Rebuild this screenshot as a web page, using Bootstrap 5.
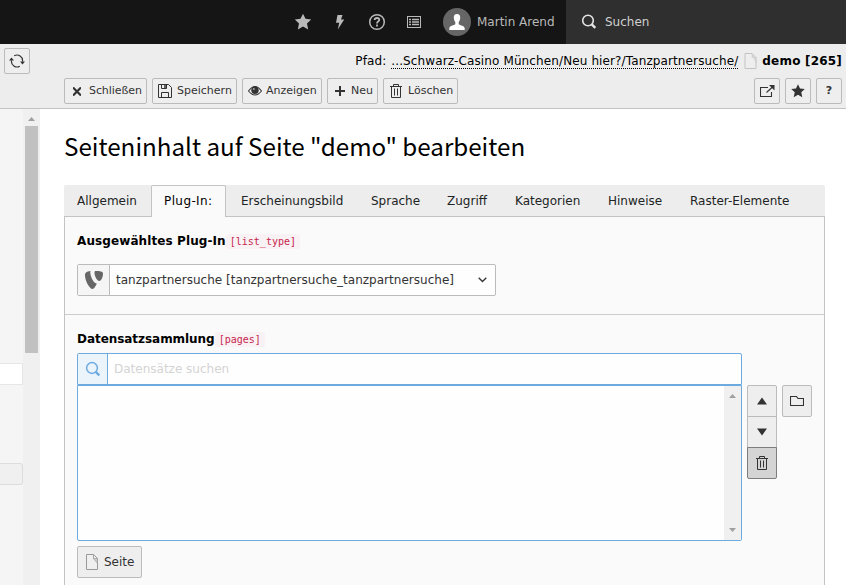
<!DOCTYPE html>
<html lang="de">
<head>
<meta charset="utf-8">
<title>Seiteninhalt bearbeiten</title>
<link href="https://cdn.jsdelivr.net/npm/bootstrap@5.3.0/dist/css/bootstrap.min.css" rel="stylesheet">
<style>
html,body{height:585px;overflow:hidden}
body{font:12px/18px "DejaVu Sans",Verdana,sans-serif;color:#000;background:#fff;white-space:nowrap}
svg{display:block;flex:none}
.topbar{height:44px;background:#151515;color:#b9b9b9}
.tb-item{width:37px}
.tb-user{width:134px;padding-left:11px;gap:6px}
.tb-search{width:280px;background:#2f2f2f;color:#d0d0d0;padding-left:15px;gap:8px}
.dochead{height:65px;background:#ededed;border-bottom:1px solid #c3c3c3}
.dh-left{width:64px;padding:4px}
.pathline{height:34px;padding-right:4px}
.pathline .trail{border-bottom:1px dotted #000;line-height:14px;letter-spacing:.115px}
.t-path{letter-spacing:.1px;margin-right:5px}
.t-demo{letter-spacing:.2px}
.btn.tool{--bs-btn-bg:#eee;--bs-btn-color:#333;--bs-btn-border-color:#bbb;--bs-btn-border-radius:2px;--bs-btn-padding-x:0;--bs-btn-padding-y:0;--bs-btn-font-size:11px;--bs-btn-line-height:16px;height:26px;display:flex;align-items:center}
.btn.sq{width:26px;justify-content:center}
.btn.tall{height:32px;width:30px;justify-content:center}
.b-close{width:83px;padding-left:8px!important;letter-spacing:-.08px}
.b-save{width:85px;margin-left:5px;padding-left:5px!important;gap:5px}
.b-view{width:80px;margin-left:5px;padding-left:5px!important;gap:4px}
.b-new{width:51px;margin-left:5px;padding-left:7px!important;gap:6px}
.b-del{width:75px;margin-left:5px;padding-left:6px!important;gap:6px}
.b-page{height:32px!important;width:65px;margin-top:5px;padding-left:8px!important;font-size:12px!important;gap:6px}
.stack{margin:37px 5px 0}
.stack .btn+.btn{margin-top:-1px}
.stack .btn:first-child{border-radius:2px 2px 0 0}
.stack .btn:nth-child(2){border-radius:0}
.stack .btn:last-child{border-radius:0 0 2px 2px;background:#d4d4d4;border-color:#7d7d7d}
.b-folder{margin-top:37px}
.work{height:476px}
.treepane{width:23px;background:#f5f5f5}
.tree-input{margin-top:254px;height:22px;background:#fff;border:1px solid #e6e6e6;border-left:0}
.tree-box{margin-top:78px;height:22px;background:#f0f0f0;border:1px solid #ddd;border-left:0;border-radius:0 3px 3px 0}
.vscroll{width:17px;padding:8px 0;background:#f0f0f0}
.vscroll .thumb{width:13px;height:227px;background:#c1c1c1;margin-top:5px}
.module{padding:0 21px 0 24px}
h1{font:400 24.2px/36px "Noto Sans CJK SC","Noto Sans CJK JP",sans-serif;margin:19px 0 21px}
.nav-tabs.formtabs{--bs-nav-tabs-border-width:0;background:#ededed;height:32px;border-bottom:1px solid #c3c3c3;border-radius:2px 2px 0 0;flex-wrap:nowrap}
.formtabs .nav-link{height:32px;padding:7px 0 0 13px;border:0;color:#212424;line-height:18px;border-radius:0}
.formtabs .nav-link.active{background:#fafafa;border:1px solid #c3c3c3;border-bottom:0;color:#000;padding:6px 0 0 12px;border-radius:2px 2px 0 0;letter-spacing:.4px}
.t1{width:87px}.t2{width:75px}.t3{width:132px}.t4{width:76px}.t5{width:68px}.t6{width:93px}.t7{width:82px}.t8{width:127px}
.formtabs .t3{padding-left:15px}
.panel-body{height:369px;background:#fafafa;border:solid #c3c3c3;border-width:0 1px}
.sec1{height:98px;border-bottom:1px solid #ccc;padding:15px 12px 0}
.sec2{padding:15px 12px 0}
.lbl{font-weight:700;height:18px}
.lbl span{letter-spacing:.1px}
.sec2 .lbl span{letter-spacing:-.05px}
.lbl code{font:10px/15px "DejaVu Sans Mono",monospace;color:#c7254e;background:#f9f2f4;padding:0 4px;border-radius:2px;margin-top:1px}
.sel{width:419px;height:32px;border:1px solid #bbb;border-radius:2px;background:#fefefe;margin-top:14px;color:#333;letter-spacing:.02px}
.sel .ico{width:32px;height:30px;background:#f5f5f5;border-right:1px solid #bbb;margin-right:6px}
.rec{width:665px}
.find{height:32px;border:1px solid #6daae0;border-radius:2px 2px 0 0;background:#fefefe;margin-top:5px;color:#d4d4d4}
.find .ico{width:30px;height:30px;background:#ebf3fb;border-right:1px solid #6daae0;margin-right:6px}
.listbox{height:156px;border:1px solid #6daae0;border-radius:0 0 2px 2px;background:#fefefe}
</style>
<script src="https://cdn.jsdelivr.net/npm/bootstrap@5.3.0/dist/js/bootstrap.bundle.min.js"></script>
</head>
<body>
<header class="topbar d-flex justify-content-end">
  <div class="tb-item d-flex align-items-center justify-content-center"><svg width="18" height="18" viewBox="0 0 18 18" fill="#b9b9b9"><path d="M9 .8l2.500 5 5.700.7-4.200 3.900 1.200 6L9 13.600l-5.200 2.800 1.200-6L.8 6.500l5.700-.7z"/></svg></div>
  <div class="tb-item d-flex align-items-center justify-content-center"><svg width="10" height="16" viewBox="0 0 10 16" fill="#b9b9b9"><path d="M2.500 1h5L6 5.500h3.200L2.800 15.400 4.200 8.800H1z"/></svg></div>
  <div class="tb-item d-flex align-items-center justify-content-center"><svg width="18" height="18" viewBox="0 0 18 18" fill="none" stroke="#b9b9b9"><circle cx="9" cy="9" r="7.300" stroke-width="1.500"/><path d="M6.600 7Q6.800 5 9 5t2.300 1.800C11.300 8.600 9 8.500 9 10.400M9 11.600v1.800" stroke-width="1.800"/></svg></div>
  <div class="tb-item d-flex align-items-center justify-content-center"><svg width="14" height="12" viewBox="0 0 14 12" fill="none" stroke="#b9b9b9"><rect x=".5" y=".5" width="13" height="11"/><path d="M2 3.500h2m1 0h7M2 6h2m1 0h7M2 8.500h2m1 0h7" stroke-width="1.400"/></svg></div>
  <div class="tb-user d-flex align-items-center"><svg width="28" height="28" viewBox="0 0 28 28"><circle cx="14" cy="14" r="14" fill="#666"/><path d="M14 6c2.300 0 3.400 1.600 3.200 4-.1 2-.8 3.100-1.500 4v2.200c.8 1 6 1.300 6 4.200V22H6.300v-1.600c0-2.900 5.200-3.200 6-4.200V14c-.7-.9-1.400-2-1.500-4C10.600 7.600 11.700 6 14 6z" fill="#fff"/></svg><span>Martin Arend</span></div>
  <div class="tb-search d-flex align-items-center"><svg width="16" height="16" viewBox="0 0 16 16" fill="none" stroke="#e4e4e4"><circle cx="7" cy="6.500" r="5.300" stroke-width="1.600"/><path d="M10.800 10.300l3.500 3.500" stroke-width="2.400"/></svg><span>Suchen</span></div>
</header>

<div class="dochead d-flex">
  <div class="dh-left"><button class="btn tool sq"><svg width="16" height="14" viewBox="0 0 16 14" fill="none" stroke="#333" stroke-width="1.200"><path d="M5.200 1.800A5.600 5.600 0 0 1 13.500 7.500M10.800 12.200A5.600 5.600 0 0 1 2.500 6.500"/><path d="M11 7.500h5l-2.500 3zM0 6.500h5L2.500 3.500z" fill="#333" stroke="none"/></svg></button></div>
  <div class="flex-grow-1">
    <div class="pathline d-flex align-items-center justify-content-end"><span class="t-path">Pfad:</span><span class="trail">...Schwarz-Casino München/Neu hier?/Tanzpartnersuche/</span><svg class="me-1 pathicon" width="20" height="16" viewBox="-6.500 0 20 16"><path d="M.5.500h7l4 4v11H.500z" fill="#eee" stroke="#c3c3c3"/><path d="M7.500.500v4h4v5z" fill="#d5d5d5" stroke="#ccc" stroke-width=".6"/></svg><b class="t-demo">demo [265]</b></div>
    <div class="d-flex pe-1">
      <button class="btn tool b-close"><svg class="me-2" width="8" height="9" viewBox="0 0 8 9"><path d="M0 .500l8 8M8 .500L0 8.500" stroke="#333" stroke-width="2.200"/></svg><span>Schließen</span></button>
      <button class="btn tool b-save"><svg width="14" height="14" viewBox="0 0 14 14" fill="none" stroke="#333"><path d="M.5.500h10l3 3v10H.500zM3.500.500v4h5v-4M3.500 13.500v-5h7v5"/><path d="M7 1v3" stroke-width="1.500"/></svg><span>Speichern</span></button>
      <button class="btn tool b-view"><svg width="14" height="12" viewBox="0 0 14 12"><path d="M.5 6Q7-3 13.500 6 7 14 .5 6z" fill="none" stroke="#333" stroke-width="1.100"/><circle cx="7" cy="5.300" r="3.700" fill="#333"/><circle cx="5.800" cy="4" r="1" fill="#aaa"/></svg><span>Anzeigen</span></button>
      <button class="btn tool b-new"><svg width="10" height="10" viewBox="0 0 10 10"><path d="M0 5h10M5 0v10" stroke="#333" stroke-width="2"/></svg><span>Neu</span></button>
      <button class="btn tool b-del"><svg width="12" height="14" viewBox="0 0 12 14" fill="none" stroke="#333"><path d="M0 2.500h12M3.500 2V.500h5V2M1.500 3v10.500h9V3M4.500 4.500v7M7.500 4.500v7"/></svg><span>Löschen</span></button>
      <div class="ms-auto d-flex" style="gap:5px">
        <button class="btn tool sq"><svg width="15" height="12" viewBox="0 0 15 12" fill="none" stroke="#333"><path d="M8 2.500H.500v9h11V7M6.500 7.500l6-5.500" stroke-width="1.100"/><path d="M9 0h5.500v5.500z" fill="#333" stroke="none"/></svg></button>
        <button class="btn tool sq"><svg width="14" height="14" viewBox="0 0 18 18" fill="#333"><path d="M9 .3l2.600 5.400 6.100.8-4.500 4.100 1.300 6.300L9 13.900l-5.500 3 1.300-6.300L.3 6.500l6.100-.8z"/></svg></button>
        <button class="btn tool sq fw-bold">?</button>
      </div>
    </div>
  </div>
</div>

<div class="work d-flex">
  <aside class="treepane"><div class="tree-input"></div><div class="tree-box"></div></aside>
  <div class="vscroll d-flex flex-column align-items-center"><svg width="7" height="4" viewBox="0 0 7 4"><path d="M0 4L3.500 0 7 4z" fill="#a0a0a0"/></svg><div class="thumb"></div></div>
  <main class="module flex-grow-1">
    <h1>Seiteninhalt auf Seite "demo" bearbeiten</h1>
    <nav class="nav nav-tabs formtabs">
      <a class="nav-link t1">Allgemein</a>
      <a class="nav-link t2 active">Plug-In:</a>
      <a class="nav-link t3">Erscheinungsbild</a>
      <a class="nav-link t4">Sprache</a>
      <a class="nav-link t5">Zugriff</a>
      <a class="nav-link t6">Kategorien</a>
      <a class="nav-link t7">Hinweise</a>
      <a class="nav-link t8">Raster-Elemente</a>
    </nav>
    <div class="panel-body">
      <section class="sec1">
        <div class="lbl d-flex align-items-center"><span>Ausgewähltes Plug-In</span><code>[list_type]</code></div>
        <div class="sel d-flex align-items-center">
          <div class="ico d-flex align-items-center justify-content-center"><svg width="18" height="18" viewBox="0 0 18 18" fill="#666"><path d="M5.500 0C4.500 2.500 7.500 12 11.800 12.500 10.800 15 9 18 7.500 18 4.500 18 0 9.500 0 4.500 0 1.500 1 .8 5.500 0zM10.500 0c4.500 0 7.500.3 7.500 2.500 0 3.500-1.800 7.500-3.500 7.500-2.500 0-5-5-5-8C9.500.5 9.800 0 10.500 0z"/></svg></div>
          <span>tanzpartnersuche [tanzpartnersuche_tanzpartnersuche]</span>
          <svg class="ms-auto me-2" width="9" height="6" viewBox="0 0 9 6"><path d="M.7.700l3.800 3.800L8.300.700" fill="none" stroke="#333" stroke-width="1.300"/></svg>
        </div>
      </section>
      <section class="sec2">
        <div class="lbl d-flex align-items-center"><span>Datensatzsammlung</span><code>[pages]</code></div>
        <div class="d-flex">
          <div class="rec">
            <div class="find d-flex align-items-center"><div class="ico d-flex align-items-center justify-content-center"><svg width="16" height="16" viewBox="0 0 16 16" fill="none" stroke="#6daae0"><circle cx="7" cy="7" r="5.400" stroke-width="1.500"/><path d="M10.800 10.800l3.500 3.500" stroke-width="2.400"/></svg></div><span>Datensätze suchen</span></div>
            <div class="listbox d-flex justify-content-end"><div class="vscroll d-flex flex-column align-items-center justify-content-between"><svg width="7" height="4" viewBox="0 0 7 4"><path d="M0 4L3.500 0 7 4z" fill="#a0a0a0"/></svg><svg width="7" height="4" viewBox="0 0 7 4"><path d="M0 0L3.500 4 7 0z" fill="#a0a0a0"/></svg></div></div>
          </div>
          <div class="stack d-flex flex-column">
            <button class="btn tool tall"><svg width="10" height="8" viewBox="0 0 10 8"><path d="M0 7.500L5 .500l5 7z" fill="#333"/></svg></button>
            <button class="btn tool tall"><svg width="10" height="8" viewBox="0 0 10 8"><path d="M0 .500L5 7.500l5-7z" fill="#333"/></svg></button>
            <button class="btn tool tall"><svg width="12" height="14" viewBox="0 0 12 14" fill="none" stroke="#333"><path d="M0 2.500h12M3.500 2V.500h5V2M1.500 3v10.500h9V3M4.500 4.500v7M7.500 4.500v7"/></svg></button>
          </div>
          <button class="btn tool tall b-folder"><svg width="14" height="10" viewBox="0 0 14 10" fill="none" stroke="#333"><path d="M.5 9.500V.500h6l1.500 2h5.500v7z" stroke-width="1.100"/></svg></button>
        </div>
        <button class="btn tool b-page"><svg width="12" height="16" viewBox="0 0 12 16"><path d="M.5.500h7l4 4v11H.500z" fill="#efefef" stroke="#999"/><path d="M7.500.500v4h4v5l-4-5z" fill="#ccc" stroke="#999" stroke-width=".6"/></svg><span>Seite</span></button>
      </section>
    </div>
  </main>
</div>
</body>
</html>
